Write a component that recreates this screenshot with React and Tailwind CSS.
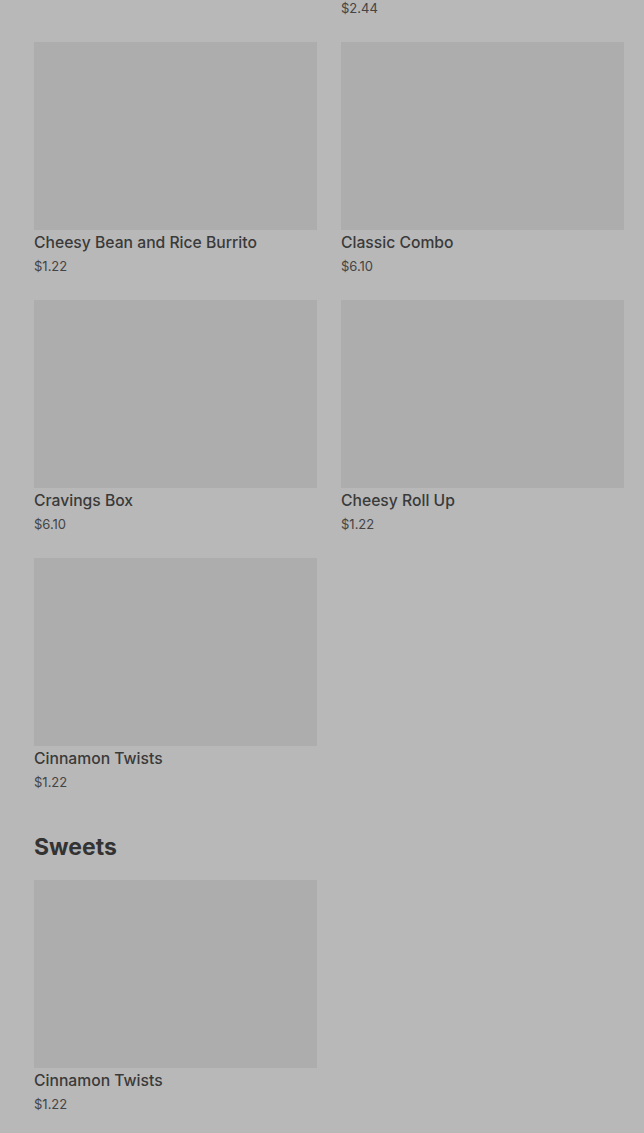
import React from "react";

const items = [
  { name: "Cheesy Bean and Rice Burrito", price: "$1.22" },
  { name: "Classic Combo", price: "$6.10" },
  { name: "Cravings Box", price: "$6.10" },
  { name: "Cheesy Roll Up", price: "$1.22" },
  { name: "Cinnamon Twists", price: "$1.22" },
];

const sweets = [{ name: "Cinnamon Twists", price: "$1.22" }];

const Card = ({ name, price }) => (
  <div className="flex flex-col">
    <div className="h-[188px] w-full bg-[#adadad]" />
    <div className="mt-[1px] text-[15.7px] font-medium leading-6 text-[#3a3a3a]">{name}</div>
    <div className="mt-[1px] text-[13px] leading-5 text-[#444444]">{price}</div>
  </div>
);

export default function App() {
  return (
    <div
      className="min-h-[1133px] w-full overflow-hidden bg-[#b8b8b8] pl-[34px] pr-[20px]"
      style={{ fontFamily: "Inter, 'Noto Sans', sans-serif" }}
    >
      <div className="-mt-[2px] grid grid-cols-2 gap-x-6">
        <div />
        <div className="text-[13px] leading-5 text-[#444444]">$2.44</div>
      </div>
      <div className="mt-6 grid grid-cols-2 gap-x-6 gap-y-6">
        {items.map((it, i) => (
          <Card key={i} {...it} />
        ))}
      </div>
      <h2 className="mt-[39px] mb-[17px] text-[23px] font-bold leading-8 text-[#333333]">Sweets</h2>
      <div className="grid grid-cols-2 gap-x-6 gap-y-6">
        {sweets.map((it, i) => (
          <Card key={i} {...it} />
        ))}
      </div>
    </div>
  );
}
